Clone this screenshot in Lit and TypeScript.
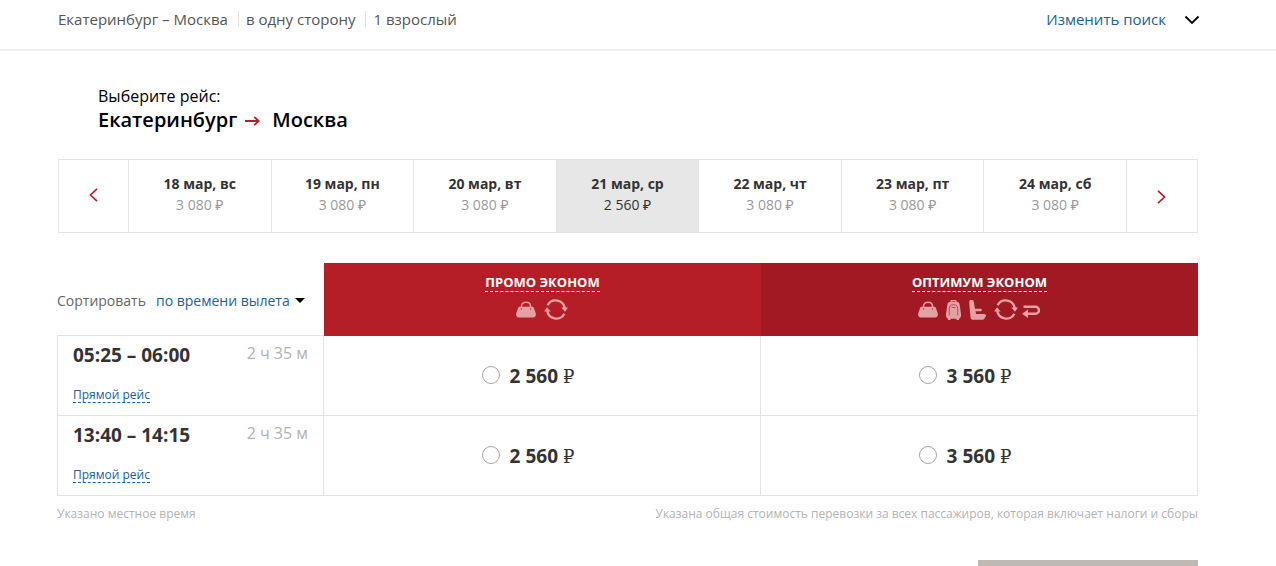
import { LitElement, html, css, svg } from "lit";
import { customElement, state } from "lit/decorators.js";

interface Day { label: string; price: string; }
interface Flight { id: string; time: string; duration: string; fares: string[]; }

const DAYS: Day[] = [
  { label: "18 мар, вс", price: "3 080" },
  { label: "19 мар, пн", price: "3 080" },
  { label: "20 мар, вт", price: "3 080" },
  { label: "21 мар, ср", price: "2 560" },
  { label: "22 мар, чт", price: "3 080" },
  { label: "23 мар, пт", price: "3 080" },
  { label: "24 мар, сб", price: "3 080" },
];

const FLIGHTS: Flight[] = [
  { id: "f1", time: "05:25 – 06:00", duration: "2 ч 35 м", fares: ["2 560", "3 560"] },
  { id: "f2", time: "13:40 – 14:15", duration: "2 ч 35 м", fares: ["2 560", "3 560"] },
];

const ICONS: Record<string, { w: number; h: number; shape: unknown }> = {
  bag: {
    w: 20, h: 17,
    shape: svg`<path d="M5.500 7V5.200C5.500 2.800 7.400 1.200 10 1.200s4.500 1.600 4.500 4V7" fill="none" stroke="currentColor" stroke-width="1.500"/>
      <path d="M4 5.800h12c1 0 1.500.5 2 1.400l1.500 4.300c1 3-.1 5-2.500 5H3c-2.400 0-3.500-2-2.500-5L2 7.200c.5-.9 1-1.400 2-1.400z" fill="currentColor"/>
      <circle cx="5.500" cy="8" r=".7" fill="#a4303a"/><circle cx="14.500" cy="8" r=".7" fill="#a4303a"/>`,
  },
  suitcase: {
    w: 15, h: 20,
    shape: svg`<path d="M5 3V1.200C5 .6 5.400.6 6 .6h3c.6 0 1 0 1 .6V3" fill="none" stroke="currentColor" stroke-width="1.300"/>
      <path d="M5 1.800h5c2.300 0 3.500 1.200 3.700 3.200L15 14c.2 2.600-.4 4-2 4.500V20h-2.500v-1.200h-6V20H2v-1.500C.4 18-.2 16.600 0 14l1.300-9C1.500 3 2.700 1.800 5 1.800z" fill="currentColor"/>
      <path d="M3.300 15.500V8.500C3.300 6 4.800 4.700 7.500 4.700s4.200 1.300 4.200 3.800v7" fill="none" stroke="#a11a23" stroke-width=".6"/>
      <path d="M5.500 7.500h4" stroke="#a11a23" stroke-width=".6"/>`,
  },
  seat: {
    w: 17, h: 20,
    shape: svg`<path d="M1 0h2.200c1 0 1.500.6 1.500 1.600L6 8.700h5.500c1.800 0 1.800 2.500 0 2.500H6.500l.6 2.800H15c2.400 0 2.400 2.700 1 3.500-.6 1.600-1.500 2.300-3 2.300H4.500c-1.800 0-2.600-.8-3-2.600L.3 3.500C.2 1.800.2.800 1 0z" fill="currentColor"/>`,
  },
  exchange: {
    w: 24, h: 21,
    shape: svg`<path d="M3.600 6.300A9.200 9.200 0 0 1 20.800 9.500M20.400 14.700A9.200 9.200 0 0 1 3.200 11.500" fill="none" stroke="currentColor" stroke-width="2.300"/>
      <path d="M17.300 8.600h6.700l-3 4.200zM6.700 12.400H0l3-4.200z" fill="currentColor"/>`,
  },
  refund: {
    w: 18, h: 13,
    shape: svg`<path d="M1.500 1.800h12a3.500 3.500 0 0 1 0 7H5" fill="none" stroke="currentColor" stroke-width="2.400"/>
      <path d="M0 8.800l6-4.300v8.500z" fill="currentColor"/>`,
  },
};

const FARES = [
  { name: "ПРОМО ЭКОНОМ", tone: "promo", icons: ["bag", "exchange"] },
  { name: "ОПТИМУМ ЭКОНОМ", tone: "optimum", icons: ["bag", "suitcase", "seat", "exchange", "refund"] },
];

@customElement("app-root")
export class AppRoot extends LitElement {
  @state() private selectedDay = 3;

  static styles = css`
    :host { display: block; background: #fff; color: #333; font-family: "Open Sans", "Noto Sans", sans-serif; font-size: 14px; line-height: 20px; }
    * { box-sizing: border-box; }
    button, select { font: inherit; color: inherit; background: none; border: 0; padding: 0; margin: 0; cursor: pointer; }
    svg { display: block; }
    a { text-decoration: none; color: #1a6199; }

    .bar { display: flex; justify-content: space-between; align-items: center; height: 51px; padding: 0 76px 12px 58px; border-bottom: 2px solid #f0f0f0; font-size: 15px; }
    .params { display: flex; margin: 0; padding: 0; list-style: none; color: #555; }
    .param { display: flex; align-items: center; }
    .param + .param::before { content: ""; width: 1px; height: 16px; margin: 0 7px 0 10px; background: #e0e0e0; }
    .edit { display: flex; align-items: center; gap: 18px; color: #1a6199; }
    .chevron { color: #000; padding-top: 2px; }

    main { padding: 34px 78px 0 57px; }
    .heading { padding-left: 41px; color: #000; }
    .choose { margin: 0; font-size: 16px; line-height: 22px; }
    .route { display: flex; align-items: center; margin: 0; font-size: 20px; line-height: 26px; font-weight: 600; }
    .route svg { margin: 2px 12px 0 8px; }

    .days { display: grid; grid-template-columns: 70px repeat(7, 1fr) 70px; height: 74px; margin: 26px 0 30px 1px; border: 1px solid #e3e3e3; }
    .day, .step { display: flex; flex-direction: column; align-items: center; border-right: 1px solid #e3e3e3; }
    .step { justify-content: center; padding-bottom: 2px; color: #b61f29; }
    .step:last-child { border-right: 0; padding: 2px 0 0; }
    .day { padding-top: 13px; color: #999; }
    .date { font-weight: 700; color: #333; line-height: 21px; }
    .cost { line-height: 21px; }
    .current { background: #e7e7e7; color: #333; }

    table { width: 100%; table-layout: fixed; border-collapse: separate; border-spacing: 0; }
    .first { width: 267px; }
    th, td { padding: 0; font-weight: 400; }
    thead th { height: 73px; vertical-align: top; }
    thead .sorting { border-bottom: 1px solid #e3e3e3; text-align: left; vertical-align: middle; }
    .sort { display: flex; align-items: center; padding-top: 3px; color: #666; }
    .select { appearance: none; margin-left: 10px; color: #1a6199; }
    .caret { margin-left: 5px; pointer-events: none; }
    .promo { background: #b61e27; }
    .optimum { background: #a11a23; }
    .fare { display: flex; flex-direction: column; align-items: center; padding-top: 11px; }
    .fare-name { color: #fff; font-size: 13px; line-height: 17px; font-weight: 700; border-bottom: 1px dashed #fff; }
    .icons { display: flex; align-items: center; gap: 8px; height: 21px; margin-top: 7px; padding-right: 2px; color: #e3a0a5; }
    .refund { margin-left: -4px; padding-top: 4px; }

    tbody th, tbody td { height: 80px; border-right: 1px solid #e3e3e3; border-bottom: 1px solid #e3e3e3; }
    tbody th { border-left: 1px solid #e3e3e3; padding: 5px 15px 0; text-align: left; vertical-align: top; }
    .times { display: flex; justify-content: space-between; align-items: flex-start; }
    .time { font-size: 19px; line-height: 28px; font-weight: 700; }
    .duration { font-size: 16px; line-height: 24px; color: #b3b3b3; }
    .direct { display: inline-block; margin-top: 18px; font-size: 12px; line-height: 15px; border-bottom: 1px dashed #1a6199; }
    .pick { display: flex; justify-content: center; align-items: center; gap: 10px; padding-right: 28px; cursor: pointer; font-size: 19px; line-height: 26px; font-weight: 700; }
    .amount { padding-top: 1px; }
    .ruble { font-family: "DejaVu Serif", serif; font-size: 18px; font-weight: 400; line-height: 1; }
    .radio { appearance: none; width: 18px; height: 18px; margin: 0 0 2px; border: 1px solid #a6a6a6; border-radius: 50%; background: #fff; }
    .radio:checked { border: 5px solid #b61e27; }

    .notes { display: flex; justify-content: space-between; margin-top: 9px; font-size: 12px; line-height: 18px; color: #b3b3b3; }
    .notes p { margin: 0; }
    .actions { display: flex; justify-content: flex-end; margin-top: 37px; height: 50px; }
    .next { width: 220px; background: #bfb9b5; }
  `;

  private icon(name: string) {
    const i = ICONS[name];
    return html`<span class=${name}><svg width=${i.w} height=${i.h} viewBox="0 0 ${i.w} ${i.h}" aria-hidden="true">${i.shape}</svg></span>`;
  }

  render() {
    return html`
      <header class="bar">
        <ul class="params">
          <li class="param">Екатеринбург – Москва</li>
          <li class="param">в одну сторону</li>
          <li class="param">1 взрослый</li>
        </ul>
        <button class="edit" type="button">
          Изменить поиск
          <span class="chevron"><svg width="16" height="10" viewBox="0 0 16 10"><path d="M1.500 1.500L8 8l6.500-6.500" fill="none" stroke="currentColor" stroke-width="1.800"/></svg></span>
        </button>
      </header>
      <main>
        <div class="heading">
          <p class="choose">Выберите рейс:</p>
          <h1 class="route">
            <span>Екатеринбург</span>
            <svg width="15" height="10" viewBox="0 0 15 10" aria-hidden="true"><path d="M0 5h13.500M9.300.8l4.400 4.200-4.400 4.200" fill="none" stroke="#b61f29" stroke-width="1.800"/></svg>
            <span>Москва</span>
          </h1>
        </div>
        <nav class="days" aria-label="Даты">
          <button class="step" type="button" aria-label="Назад">
            <svg width="9" height="14" viewBox="0 0 9 14"><path d="M8 .8L1.500 7 8 13.200" fill="none" stroke="currentColor" stroke-width="1.700"/></svg>
          </button>
          ${DAYS.map((d, i) => html`
            <button type="button" class="day ${i === this.selectedDay ? "current" : ""}" @click=${() => (this.selectedDay = i)}>
              <span class="date">${d.label}</span><span class="cost">${d.price} ₽</span>
            </button>`)}
          <button class="step" type="button" aria-label="Вперёд">
            <svg width="9" height="14" viewBox="0 0 9 14"><path d="M1 .8L7.500 7 1 13.200" fill="none" stroke="currentColor" stroke-width="1.700"/></svg>
          </button>
        </nav>
        <table>
          <thead>
            <tr>
              <th class="first sorting">
                <div class="sort">
                  <label for="sort">Сортировать</label>
                  <select id="sort" class="select"><option>по времени вылета</option></select>
                  <svg class="caret" width="10" height="5" viewBox="0 0 10 5" aria-hidden="true"><path d="M0 0h10L5 5z"/></svg>
                </div>
              </th>
              ${FARES.map((f) => html`
                <th class=${f.tone} scope="col">
                  <div class="fare">
                    <a class="fare-name" href="#">${f.name}</a>
                    <div class="icons">${f.icons.map((n) => this.icon(n))}</div>
                  </div>
                </th>`)}
            </tr>
          </thead>
          <tbody>
            ${FLIGHTS.map((f) => html`
              <tr>
                <th scope="row">
                  <div class="times"><span class="time">${f.time}</span><span class="duration">${f.duration}</span></div>
                  <a class="direct" href="#">Прямой рейс</a>
                </th>
                ${f.fares.map((p, i) => html`
                  <td>
                    <label class="pick"><input class="radio" type="radio" name="fare" value="${f.id}-${i}" /><span class="amount">${p} <span class="ruble">₽</span></span></label>
                  </td>`)}
              </tr>`)}
          </tbody>
        </table>
        <div class="notes">
          <p>Указано местное время</p>
          <p>Указана общая стоимость перевозки за всех пассажиров, которая включает налоги и сборы</p>
        </div>
        <div class="actions"><button class="next" type="button" aria-label="Продолжить"></button></div>
      </main>
    `;
  }
}
